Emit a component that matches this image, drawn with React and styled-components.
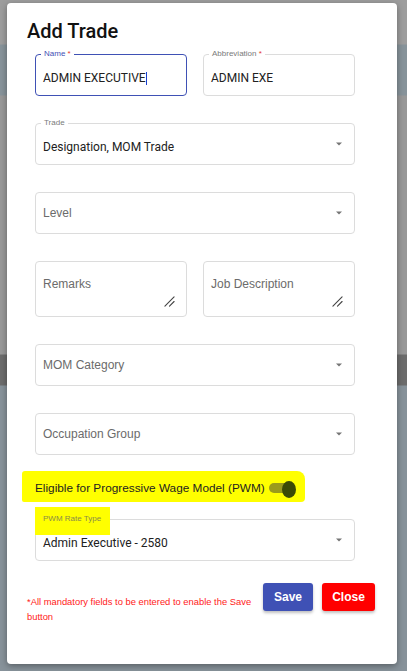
import React from "react";
import styled, { createGlobalStyle } from "styled-components";

const GlobalStyle = createGlobalStyle`
  html, body {
    margin: 0;
    padding: 0;
  }
  body {
    font-family: Roboto, "Liberation Sans", Arial, sans-serif;
  }
`;

export default function App() {
  return (
    <>
      <GlobalStyle />
      <Backdrop>
        <Dialog>
          <Title>Add Trade</Title>
          <Form>
            <Pair>
              <TextField label="Name" required focused value="ADMIN EXECUTIVE" />
              <TextField label="Abbreviation" required value="ADMIN EXE" />
            </Pair>
            <SelectField label="Trade" value="Designation, MOM Trade" />
            <SelectField placeholder="Level" />
            <Pair>
              <AreaField placeholder="Remarks" />
              <AreaField placeholder="Job Description" />
            </Pair>
            <SelectField placeholder="MOM Category" />
            <SelectField placeholder="Occupation Group" />
          </Form>
          <SwitchRow>
            <span>Eligible for Progressive Wage Model (PWM)</span>
            <Switch>
              <span />
            </Switch>
          </SwitchRow>
          <PwmWrap>
            <SelectField label="PWM Rate Type" highlight value="Admin Executive - 2580" />
          </PwmWrap>
          <Footer>
            <Note>*All mandatory fields to be entered to enable the Save button</Note>
            <Actions>
              <Button $color="#3f51b5" $width={50}>Save</Button>
              <Button $color="#ff0000" $width={53}>Close</Button>
            </Actions>
          </Footer>
        </Dialog>
      </Backdrop>
    </>
  );
}

function TextField({ label, required, focused, value }) {
  return (
    <Box $focused={focused}>
      <Label $focused={focused}>
        {label}
        {required && <Star> *</Star>}
      </Label>
      <Value $withLabel>
        {value}
        {focused && <Caret />}
      </Value>
    </Box>
  );
}

function SelectField({ label, value, placeholder, highlight }) {
  return (
    <Box>
      {label && <Label $highlight={highlight}>{label}</Label>}
      {value ? <Value $withLabel>{value}</Value> : <Placeholder>{placeholder}</Placeholder>}
      <Arrow viewBox="0 0 6 4">
        <path d="M0 0.5 L6 0.5 L3 3.5 Z" fill="#757575" />
      </Arrow>
    </Box>
  );
}

function AreaField({ placeholder }) {
  return (
    <Box $tall>
      <Placeholder $top>{placeholder}</Placeholder>
      <Grip viewBox="0 0 12 12">
        <path d="M1 11 L11 1 M6 11 L11 6" stroke="#444" strokeWidth="1.2" strokeLinecap="round" />
      </Grip>
    </Box>
  );
}

const Backdrop = styled.div`
  width: 407px;
  height: 671px;
  box-sizing: border-box;
  padding: 3px 10px 7px 7px;
  background: linear-gradient(
    to bottom,
    #9d9d9d 0px,
    #9d9d9d 44px,
    #87939a 45px,
    #87939a 95px,
    #989898 96px,
    #989898 354px,
    #6c6c6c 355px,
    #6c6c6c 385px,
    #87929a 386px,
    #87929a 100%
  );
`;

const Dialog = styled.div`
  height: 661px;
  box-sizing: border-box;
  background: #ffffff;
  border-radius: 4px;
  box-shadow: 0 2px 6px rgba(0, 0, 0, 0.35);
  display: flex;
  flex-direction: column;
  padding: 16px 22px 0 20px;
`;

const Title = styled.h2`
  margin: 0 0 11px;
  font-family: Roboto, sans-serif;
  font-size: 20px;
  line-height: 24px;
  font-weight: 500;
  color: #111;
`;

const Form = styled.div`
  display: flex;
  flex-direction: column;
  gap: 27px;
  margin: 0 20px 0 8px;
`;

const Pair = styled.div`
  display: grid;
  grid-template-columns: 152px 152px;
  column-gap: 16px;
`;

const Box = styled.div`
  position: relative;
  height: ${(p) => (p.$tall ? 56 : 42)}px;
  box-sizing: border-box;
  border: 1px solid ${(p) => (p.$focused ? "#3f51b5" : "#dcdcdc")};
  border-radius: 4px;
  display: flex;
  align-items: ${(p) => (p.$tall ? "flex-start" : "center")};
  padding: 0 7px;
`;

const Label = styled.span`
  position: absolute;
  left: ${(p) => (p.$highlight ? "-1px" : "5px")};
  top: ${(p) => (p.$highlight ? "-13px" : "-6px")};
  padding: ${(p) => (p.$highlight ? "7px 9px 11px 8px" : "0 3px")};
  background: ${(p) => (p.$highlight ? "#ffff00" : "#ffffff")};
  font-family: "Liberation Sans", Arial, sans-serif;
  font-size: 8px;
  line-height: 10px;
  color: ${(p) => (p.$focused ? "#3f51b5" : p.$highlight ? "#8a8a4a" : "#7a7a7a")};
`;

const Star = styled.span`
  color: #e53935;
`;

const Value = styled.div`
  position: relative;
  padding-top: ${(p) => (p.$withLabel ? "6px" : "0")};
  font-size: 12px;
  color: #212121;
  display: flex;
  align-items: center;
`;

const Caret = styled.span`
  display: inline-block;
  width: 1.5px;
  height: 13px;
  background: #1a3fcf;
`;

const Placeholder = styled.div`
  padding-top: ${(p) => (p.$top ? "15px" : "0")};
  font-family: "Liberation Sans", Arial, sans-serif;
  font-size: 12px;
  color: #6b6b6b;
`;

const Arrow = styled.svg`
  position: absolute;
  right: 12px;
  top: 50%;
  width: 6px;
  height: 4px;
  margin-top: -2px;
`;

const Grip = styled.svg`
  position: absolute;
  right: 11px;
  bottom: 9px;
  width: 11px;
  height: 11px;
`;

const SwitchRow = styled.div`
  margin: 16px 0 0 -5px;
  width: 283px;
  height: 31px;
  box-sizing: border-box;
  padding-left: 13px;
  background: #ffff00;
  border-radius: 3px 8px 4px 2px;
  display: flex;
  align-items: center;
  gap: 4px;
  font-family: "Liberation Sans", Arial, sans-serif;
  font-size: 11.8px;
  color: #222;
  span:first-child {
    padding-top: 3px;
  }
`;

const Switch = styled.div`
  position: relative;
  width: 24px;
  height: 10px;
  margin-top: 2px;
  border-radius: 5px;
  background: #9a9a1c;
  span {
    position: absolute;
    right: -3px;
    top: -2px;
    width: 14px;
    height: 14px;
    border-radius: 50%;
    background: #3b4a06;
  }
`;

const PwmWrap = styled.div`
  margin: 17px 20px 0 8px;
`;

const Footer = styled.div`
  margin-top: 22px;
  display: flex;
  justify-content: space-between;
  align-items: flex-start;
`;

const Note = styled.p`
  margin: 11px 0 0;
  width: 232px;
  font-family: "Liberation Sans", Arial, sans-serif;
  font-size: 9.4px;
  line-height: 15px;
  color: #ff1a1a;
`;

const Actions = styled.div`
  display: flex;
  gap: 9px;
`;

const Button = styled.button`
  width: ${(p) => p.$width}px;
  height: 28px;
  padding: 0;
  border: none;
  border-radius: 3px;
  background: ${(p) => p.$color};
  color: #ffffff;
  font-family: "Liberation Sans", Arial, sans-serif;
  font-size: 12px;
  font-weight: 700;
  box-shadow: 0 2px 3px rgba(0, 0, 0, 0.25);
`;
